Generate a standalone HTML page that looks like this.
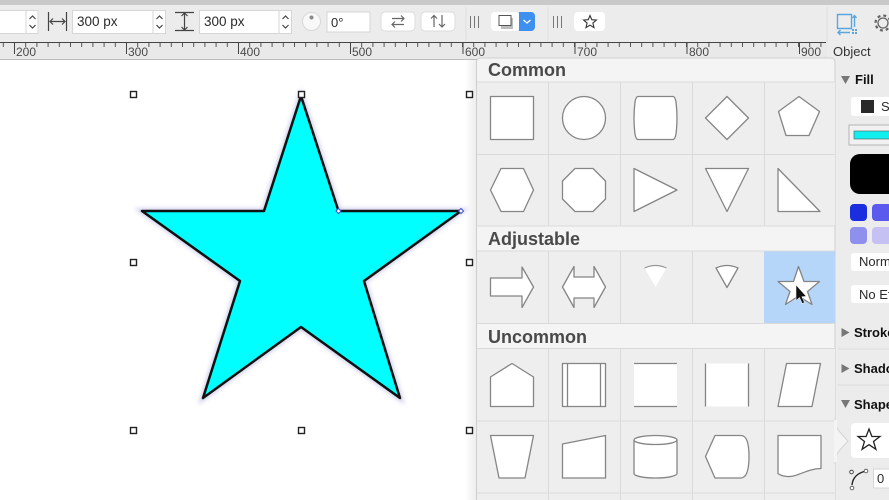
<!DOCTYPE html>
<html><head><meta charset="utf-8"><style>
html,body{margin:0;padding:0;background:#fff;width:889px;height:500px;overflow:hidden}
svg{display:block;font-family:"Liberation Sans",sans-serif;filter:blur(.35px)}
.ic{fill:#fff;stroke:#858585;stroke-width:1.3;stroke-linejoin:round}
.ln{fill:none;stroke:#858585;stroke-width:1.3}
.g{stroke:#dadada;stroke-width:1;fill:none}
.h{font-size:18px;font-weight:bold;fill:#4a4a4a}
.r{font-size:12px;fill:#4a4a4a}
.f{fill:#fff;stroke:#d6d6d6;stroke-width:1}
.t{font-size:13px;fill:#2a2a2a}
.b{font-size:13px;font-weight:bold;fill:#111}
.tool{fill:none;stroke:#444;stroke-width:1.2}
</style></head><body>
<svg width="889" height="500" viewBox="0 0 889 500" xmlns="http://www.w3.org/2000/svg">
<defs>
<pattern id="tk" x="14" y="43" width="11.2" height="8" patternUnits="userSpaceOnUse"><rect x="0" y="0" width="1" height="4" fill="#555"/></pattern>
<filter id="bl"><feGaussianBlur stdDeviation="2"/></filter>
<linearGradient id="sh" x1="0" x2="1" y1="0" y2="0"><stop offset="0" stop-color="#fff"/><stop offset="1" stop-color="#dcdcdc"/></linearGradient>
</defs>
<rect width="889" height="500" fill="#fff"/>
<!-- top bar -->
<rect width="889" height="5" fill="#c9c9c9"/>
<rect y="5" width="889" height="38" fill="#ececec"/>
<!-- ruler -->
<rect y="43" width="889" height="16" fill="#e9e9e9"/>
<rect y="59" width="889" height="1" fill="#bdbdbd"/>
<rect y="43" width="826" height="8" fill="url(#tk)"/>
<rect y="42" width="826" height="1" fill="#444"/>
<g fill="#444">
<rect x="14" y="43" width="1" height="11"/><rect x="126" y="43" width="1" height="11"/><rect x="238" y="43" width="1" height="11"/><rect x="350" y="43" width="1" height="11"/><rect x="462.500" y="43" width="1" height="11"/><rect x="574.500" y="43" width="1" height="11"/><rect x="686.500" y="43" width="1" height="11"/><rect x="799" y="43" width="1" height="11"/>
</g>
<g fill="#e9e9e9"><rect x="16" y="47" width="19" height="11"/><rect x="128" y="47" width="19" height="11"/><rect x="240" y="47" width="19" height="11"/><rect x="352" y="47" width="19" height="11"/><rect x="465" y="47" width="19" height="11"/><rect x="577" y="47" width="19" height="11"/><rect x="689" y="47" width="19" height="11"/><rect x="801" y="47" width="19" height="11"/></g>
<g class="r"><text x="16" y="56">200</text><text x="128" y="56">300</text><text x="240" y="56">400</text><text x="352" y="56">500</text><text x="465" y="56">600</text><text x="577" y="56">700</text><text x="689" y="56">800</text><text x="801" y="56">900</text></g>
<!-- toolbar -->
<rect x="-5" y="10.500" width="43" height="23" class="f"/><line x1="26" y1="11" x2="26" y2="33" stroke="#d6d6d6"/>
<path d="M29.500 19l3-3 3 3M29.500 25l3 3 3-3" class="tool"/>
<path d="M48.500 12v19M66.500 12v19M50 21.500h15M53 18.500l-3 3 3 3M62 18.500l3 3-3 3" class="tool"/>
<rect x="72.500" y="10.500" width="93" height="23" class="f"/><line x1="153" y1="11" x2="153" y2="33" stroke="#d6d6d6"/>
<path d="M156.500 19l3-3 3 3M156.500 25l3 3 3-3" class="tool"/>
<text x="77" y="26" font-size="13.500" fill="#2a2a2a">300 px</text>
<path d="M175 12.500h19M175 30.500h19M184.500 13v17M181.500 16l3-3 3 3M181.500 27l3 3 3-3" class="tool"/>
<rect x="199.500" y="10.500" width="92" height="23" class="f"/><line x1="279" y1="11" x2="279" y2="33" stroke="#d6d6d6"/>
<path d="M282.500 19l3-3 3 3M282.500 25l3 3 3-3" class="tool"/>
<text x="204" y="26" font-size="13.500" fill="#2a2a2a">300 px</text>
<circle cx="311.500" cy="21.500" r="9" fill="#f8f8f8" stroke="#d8d8d8"/><circle cx="311.500" cy="17.500" r="2" fill="#8a8a8a"/>
<rect x="327" y="12" width="43" height="20" class="f"/>
<text x="331" y="27" font-size="13" fill="#2a2a2a">0°</text>
<rect x="381" y="12" width="34" height="19" rx="4" fill="#fff" stroke="#dcdcdc"/>
<path d="M392 18.500h12M401 15.500l3 3-3 3M404 24.500h-12M395 21.500l-3 3 3 3" fill="none" stroke="#666" stroke-width="1.200"/>
<rect x="421" y="12" width="34" height="19" rx="4" fill="#fff" stroke="#dcdcdc"/>
<path d="M434 27V15.500M431 18.500l3-3 3 3M442 15v12M439 24l3 3 3-3" fill="none" stroke="#666" stroke-width="1.200"/>
<line x1="466" y1="7" x2="466" y2="42" stroke="#e0e0e0"/>
<path d="M470.500 16v12M474.500 16v12M478.500 16v12" stroke="#777" fill="none"/>
<rect x="491" y="12" width="28" height="19" rx="4" fill="#fff"/>
<rect x="501" y="18" width="12" height="11" fill="#bdbdbd"/>
<rect x="499" y="15.500" width="12" height="10" fill="#fff" stroke="#555"/>
<path d="M519 12h12a4 4 0 0 1 4 4v11a4 4 0 0 1-4 4h-12z" fill="#3d8ff0"/>
<path d="M523.500 20l3.500 3 3.500-3" fill="none" stroke="#fff" stroke-width="1.300"/>
<line x1="548" y1="7" x2="548" y2="42" stroke="#e0e0e0"/>
<path d="M553.500 16v12M557.500 16v12M561.500 16v12" stroke="#777" fill="none"/>
<rect x="574" y="12" width="31" height="19" rx="4" fill="#fff"/>
<path d="M590 15.500l1.800 4.200 4.600.4-3.500 3 1.100 4.500-4-2.400-4 2.400 1.100-4.500-3.500-3 4.600-.4z" fill="none" stroke="#333" stroke-width="1.100"/>
<line x1="827" y1="7" x2="827" y2="43" stroke="#dedede"/>
<rect x="827" y="43" width="62" height="17" fill="#ececec"/>
<path d="M837.500 14.500h14v14h-14zM854.500 27V15.500M852.500 18l2-2.500 2 2.500M850 32.500h-12M840.500 30l-2.500 2.500 2.500 2.500" fill="none" stroke="#5aa7e0" stroke-width="1.400"/>
<rect x="852" y="29" width="2" height="2" fill="#5aa7e0"/><rect x="855" y="29" width="2" height="2" fill="#5aa7e0"/><rect x="852" y="32" width="2" height="2" fill="#5aa7e0"/><rect x="855" y="32" width="2" height="2" fill="#5aa7e0"/>
<circle cx="883" cy="23" r="5" fill="none" stroke="#666" stroke-width="1.300"/><circle cx="883" cy="23" r="7.500" fill="none" stroke="#666" stroke-width="2.200" stroke-dasharray="3 2.900"/>
<text x="833" y="56" font-size="13" fill="#333">Object</text>
<!-- star on canvas -->
<rect x="465" y="60" width="11" height="440" fill="url(#sh)" opacity=".5"/>
<path d="M301 96L338.500 211H461L364 281L400 398L301 327L203 398L240 281L142 211H264Z" fill="none" stroke="#c9c9e8" stroke-width="5" filter="url(#bl)"/>
<path d="M301 96L338.500 211H461L364 281L400 398L301 327L203 398L240 281L142 211H264Z" fill="#0ff" stroke="#111" stroke-width="2.500" stroke-linejoin="round"/>
<g fill="#fff" stroke="#222" stroke-width="1.400">
<rect x="130.500" y="91.500" width="6" height="6"/><rect x="298.500" y="91.500" width="6" height="6"/><rect x="466.500" y="91.500" width="6" height="6"/>
<rect x="130.500" y="259.500" width="6" height="6"/><rect x="466.500" y="259.500" width="6" height="6"/>
<rect x="130.500" y="427.500" width="6" height="6"/><rect x="298.500" y="427.500" width="6" height="6"/><rect x="466.500" y="427.500" width="6" height="6"/>
</g>
<path d="M338.500 208.500l2.500 2.500-2.500 2.500-2.500-2.500zM461 208.500l2.500 2.500-2.500 2.500-2.500-2.500z" fill="#fff" stroke="#3a4fd0"/>
<!-- sidebar -->
<rect x="835" y="60" width="54" height="440" fill="#ececec"/>
<!-- panel -->
<path d="M476.500 500V62a4 4 0 0 1 4-4H831a4 4 0 0 1 4 4V500z" fill="#f4f4f4" stroke="#cfcfcf"/>
<rect x="477" y="82" width="358" height="144" fill="#eeeeee"/>
<rect x="477" y="251" width="358" height="73" fill="#eeeeee"/>
<rect x="764" y="251" width="71" height="73" fill="#b5d6f9"/>
<rect x="477" y="349" width="358" height="151" fill="#eeeeee"/>
<text x="488" y="76" class="h">Common</text>
<text x="488" y="245" class="h">Adjustable</text>
<text x="488" y="343" class="h">Uncommon</text>
<g class="g">
<path d="M477 82h358M477 154.500h358M477 226h358M477 251h358M477 323.500h358M477 348.500h358M477 421h358M477 493h358"/>
<path d="M548.500 82v144M620.500 82v144M692.500 82v144M764.500 82v144"/>
<path d="M548.500 251v73M620.500 251v73M692.500 251v73"/>
<path d="M548.500 349v151M620.500 349v151M692.500 349v151M764.500 349v151"/>
</g>
<!-- popover notch -->
<path d="M835 418Q835 426 839 431L848 441 839 451Q835 456 835 464V418z" fill="#f4f4f4" stroke="#d4d4d4"/>
<rect x="834" y="420" width="3" height="42" fill="#f4f4f4"/>
<!-- Common row 1 -->
<rect class="ic" x="490.500" y="96.500" width="43" height="43"/>
<circle class="ic" cx="584" cy="118" r="21.500"/>
<path class="ic" d="M638 96.500H673Q675 96.500 676 102Q678 118 676 134Q675 139.500 673 139.500H638Q636 139.500 635 134Q633 118 635 102Q636 96.500 638 96.500z"/>
<path class="ic" d="M727 96.500L748.500 118 727 139.500 705.500 118z"/>
<path class="ic" d="M799 96.500L819.500 111.500 809 135.500H786L778.500 111.500z"/>
<!-- row 2 -->
<path class="ic" d="M501 168.500h22.500L533.500 190l-10 21.500H501L490.500 190z"/>
<path class="ic" d="M575 168.500h18L605.500 181v18L593 211.500h-18L562.500 199v-18z"/>
<path class="ic" d="M634 168.500L677 190 634 211.500z"/>
<path class="ic" d="M705.500 168.500h43L727 211.500z"/>
<path class="ic" d="M778 168.500L820 211.500H778z"/>
<!-- Adjustable -->
<path class="ic" d="M490.500 278h31.500v-11L533.500 287 522 307.500V296H490.500z"/>
<path class="ic" d="M562.500 287L574 266.500V277h20V266.500L605.500 287 594 307.500V298H574v9.500z"/>
<path d="M644.500 268Q655.500 263 666.500 268L655.500 287z" fill="#fff"/><path d="M644.500 268Q655.500 263 666.500 268" fill="none" stroke="#999" stroke-width="1.200"/>
<path class="ic" d="M716 268Q727 263 738 268L727 287.500z"/>
<path class="ic" d="M798.500 266.500L804 281.500H819.500L807.500 291.500 812 304.500 798.500 296 785.500 304.500 790 291.500 778 281.500H793.500z"/>
<path d="M796 285v15.500l3.500-3 2.800 6 2.200-1-2.700-5.800 4.500-.3z" fill="#111" stroke="#fff" stroke-width=".5"/>
<!-- Uncommon row 1 -->
<path class="ic" d="M512 363.500L533.500 377v29.500h-43V377z"/>
<rect class="ic" x="562.500" y="363.500" width="43" height="43"/><path class="ln" d="M567.500 364v42M600.500 364v42"/>
<rect x="634" y="363.500" width="43" height="43" fill="#fff"/><path class="ln" d="M634 363.500h43M634 406.500h43"/>
<rect x="705.500" y="363.500" width="43" height="43" fill="#fff"/><path class="ln" d="M705.500 363.500v43M748.500 363.500v43"/>
<path class="ic" d="M786.500 363.500H820.500L812 406.500H778z"/>
<!-- row 2 -->
<path class="ic" d="M490.500 435.500h43L525 478h-26z"/>
<path class="ic" d="M562.500 444L605.500 435.500V478h-43z"/>
<path class="ic" d="M634 440a21.500 4.500 0 0 1 43 0V473.500a21.500 4.500 0 0 1-43 0z"/><path class="ln" d="M634 440a21.500 4.500 0 0 0 43 0"/>
<path class="ic" d="M715 435.500h26q8 0 8 21 0 21-8 21.500h-26L705.500 456.500z"/>
<path class="ic" d="M778 435.500h43V468.500c-14 0-24 9-34 8q-6-.5-9-3z"/>
<!-- sidebar content -->
<path d="M841 76h9l-4.500 8z" fill="#777"/><text x="855" y="84" class="b">Fill</text>
<rect x="851" y="97" width="50" height="19" rx="3" fill="#fff"/><rect x="861" y="100" width="13" height="13" fill="#2a2a2a"/><text x="881" y="111" class="t">S</text>
<rect x="849" y="125" width="50" height="20" fill="#f1f1f1" stroke="#b5b5b5"/><rect x="854" y="131" width="45" height="8" fill="#11eeee" stroke="#555" stroke-width=".6"/>
<rect x="850" y="154" width="60" height="40" rx="10" fill="#000"/>
<rect x="850" y="204" width="17" height="17" rx="4" fill="#1a2ee0"/><rect x="872" y="204" width="20" height="17" rx="4" fill="#5a5bee"/>
<rect x="850" y="227" width="17" height="17" rx="4" fill="#8f90ee"/><rect x="872" y="227" width="20" height="17" rx="4" fill="#c5c2f3"/>
<rect x="851" y="253" width="50" height="18" rx="3" fill="#fff"/><text x="859" y="266" class="t">Norm</text>
<rect x="851" y="285" width="50" height="18" rx="3" fill="#fff"/><text x="859" y="299" class="t">No Ef</text>
<path d="M841.500 328l8 4.500-8 4.500z" fill="#777"/><text x="854" y="337" class="b">Stroke</text>
<path d="M838 349h51M838 385h51" stroke="#dcdcdc"/>
<path d="M841.500 364l8 4.500-8 4.500z" fill="#777"/><text x="854" y="373" class="b">Shadow</text>
<path d="M841 400h9l-4.500 8z" fill="#777"/><text x="854" y="409" class="b">Shape</text>
<rect x="851" y="423" width="50" height="35" rx="4" fill="#fff"/>
<path d="M869 429l2.900 7.500h8l-6.400 5 2.400 7.800-6.900-4.600-6.900 4.600 2.400-7.800-6.400-5h8z" fill="none" stroke="#222" stroke-width="1.300"/>
<path d="M852 485Q853 474 866 471" fill="none" stroke="#222" stroke-width="1.400"/><circle cx="866" cy="471" r="1.800" fill="#fff" stroke="#666"/><circle cx="851.500" cy="472" r="1.800" fill="#fff" stroke="#444"/><circle cx="852" cy="488" r="1.800" fill="#fff" stroke="#666"/>
<rect x="873.500" y="469" width="30" height="19" fill="#fff" stroke="#d6d6d6"/><text x="877" y="483" class="t">0</text>
</svg>
</body></html>
